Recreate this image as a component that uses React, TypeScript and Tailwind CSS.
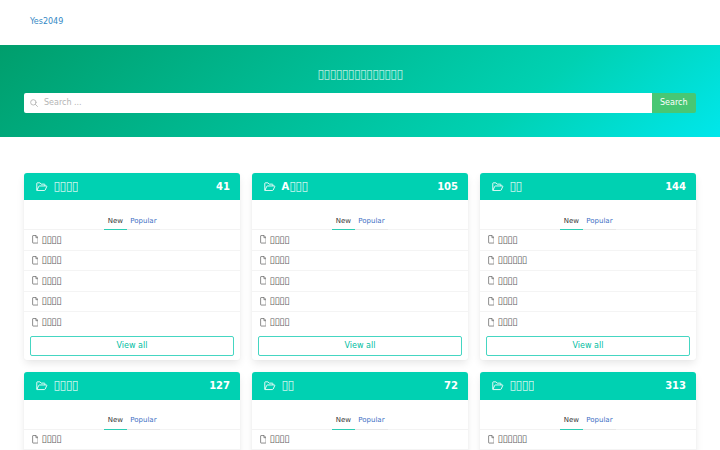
import clsx from 'clsx'

const categories = [
  { prefix: '', name: '▯▯▯▯', count: 41, items: ['▯▯▯▯', '▯▯▯▯', '▯▯▯▯', '▯▯▯▯', '▯▯▯▯'] },
  { prefix: 'A', name: '▯▯▯', count: 105, items: ['▯▯▯▯', '▯▯▯▯', '▯▯▯▯', '▯▯▯▯', '▯▯▯▯'] },
  { prefix: '', name: '▯▯', count: 144, items: ['▯▯▯▯', '▯▯▯▯▯▯', '▯▯▯▯', '▯▯▯▯', '▯▯▯▯'] },
  { prefix: '', name: '▯▯▯▯', count: 127, items: ['▯▯▯▯', '▯▯▯▯', '▯▯▯▯', '▯▯▯▯', '▯▯▯▯'] },
  { prefix: '', name: '▯▯', count: 72, items: ['▯▯▯▯', '▯▯▯▯', '▯▯▯▯', '▯▯▯▯', '▯▯▯▯'] },
  { prefix: '', name: '▯▯▯▯', count: 313, items: ['▯▯▯▯▯▯', '▯▯▯▯', '▯▯▯▯', '▯▯▯▯', '▯▯▯▯'] },
]

function FolderIcon() {
  return (
    <svg viewBox="0 0 22 18" className="w-[11.5px] h-[9.5px] shrink-0" fill="none" stroke="currentColor" strokeWidth="1.7" strokeLinejoin="round">
      <path d="M1.5 15.5V2.5q0-1 1-1H7.5l2.5 2.5h6q1 0 1 1V7.5" />
      <path d="M1.7 16.2 5.2 8.4q.5-.9 1.5-.9H19.8q1.3 0 .8 1.1l-3.1 6.8q-.5.9-1.5.9H2.2q-.7 0-.7-.8" />
    </svg>
  )
}

function FileIcon() {
  return (
    <svg viewBox="0 0 12 16" className="w-[6.6px] h-[8.6px] shrink-0" fill="none" stroke="currentColor" strokeWidth="1.4" strokeLinejoin="round">
      <path d="M1.8 1H7.4L11.2 4.8V14.2q0 .8-.8.8H1.8q-.8 0-.8-.8V1.8Q1 1 1.8 1Z" />
      <path d="M7.2 1V5H11.2" />
    </svg>
  )
}

function SearchIcon() {
  return (
    <svg viewBox="0 0 16 16" className="w-[8px] h-[8px] shrink-0" fill="none" stroke="currentColor" strokeWidth="1.8" strokeLinecap="round">
      <circle cx="6.7" cy="6.7" r="5.4" />
      <path d="M10.8 10.8 15 15" />
    </svg>
  )
}

function Boxes({ text }: { text: string }) {
  return <span className="text-[1.25em] leading-none font-normal tracking-[-0.065em] opacity-80">{text}</span>
}

function CategoryCard({ prefix, name, count, items }: { prefix: string; name: string; count: number; items: string[] }) {
  return (
    <div className="h-[187.5px] rounded-[3px] bg-white shadow-[0_4px_8px_-1px_rgba(10,10,10,0.1),0_0_0_0.5px_rgba(10,10,10,0.02)]">
      <header className="flex h-[27.5px] items-center rounded-t-[3px] bg-[#00d1b2] pl-3 pr-[10px] text-[10px] font-bold text-white">
        <FolderIcon />
        <span className="ml-[6px] flex-1">
          {prefix}
          <Boxes text={name} />
        </span>
        <span>{count}</span>
      </header>

      <div className="flex h-[30px] items-end justify-center border-b border-[#f3f3f3] text-[7px] leading-[10.5px]">
        <a className="relative z-10 -mb-px border-b border-[#2ccdb3] px-[3.75px] pb-[3px] text-[#363636]">New</a>
        <a className="-mb-px border-b border-[#e8e8e8] px-[3.6px] pb-[3px] text-[#3e6fc4]">Popular</a>
      </div>

      <ul className="text-[8px] text-[#363636]">
        {items.map((item, i) => (
          <li
            key={i}
            className={clsx('flex h-[20.5px] items-center pl-[7.8px]', i < items.length - 1 && 'border-b border-[#f4f4f4]')}
          >
            <span className="text-[#6a6a6a]">
              <FileIcon />
            </span>
            <span className="ml-[3.2px] flex items-center">
              <Boxes text={item} />
            </span>
          </li>
        ))}
      </ul>

      <div className="px-[6px] pt-[3px]">
        <button className="block h-5 w-full rounded-[2px] border border-[#45d6c2] text-[8px] leading-[18px] text-[#00bda2]">
          View all
        </button>
      </div>
    </div>
  )
}

export default function App() {
  return (
    <div className="h-[450px] overflow-hidden bg-white font-['DejaVu_Sans',sans-serif] text-[8px]">
      <nav className="flex h-[45px] items-center pl-[30px] pb-[1px]">
        <a className="text-[#3489c5]">Yes2049</a>
      </nav>

      <section className="h-[91.5px] bg-[linear-gradient(141deg,#009e6c_0%,#00d1b2_71%,#00e7eb_100%)] px-6 pt-[22px]">
        <h1 className="h-[15px] text-center text-[10px] leading-[15px] text-white/90">
          <Boxes text="▯▯▯▯▯▯▯▯▯▯▯▯▯▯" />
        </h1>
        <div className="mt-[11px] flex h-[19.5px]">
          <div className="flex flex-1 items-center rounded-l-[2px] bg-white pl-[6px] text-[#b5b5b5]">
            <SearchIcon />
            <span className="ml-[6px]">Search ...</span>
          </div>
          <button className="w-[44.5px] rounded-r-[2px] bg-[#48c774] text-white">Search</button>
        </div>
      </section>

      <main className="grid grid-cols-3 gap-x-3 gap-y-[12px] px-6 pt-[36px]">
        {categories.map((category, i) => (
          <CategoryCard key={i} {...category} />
        ))}
      </main>
    </div>
  )
}
